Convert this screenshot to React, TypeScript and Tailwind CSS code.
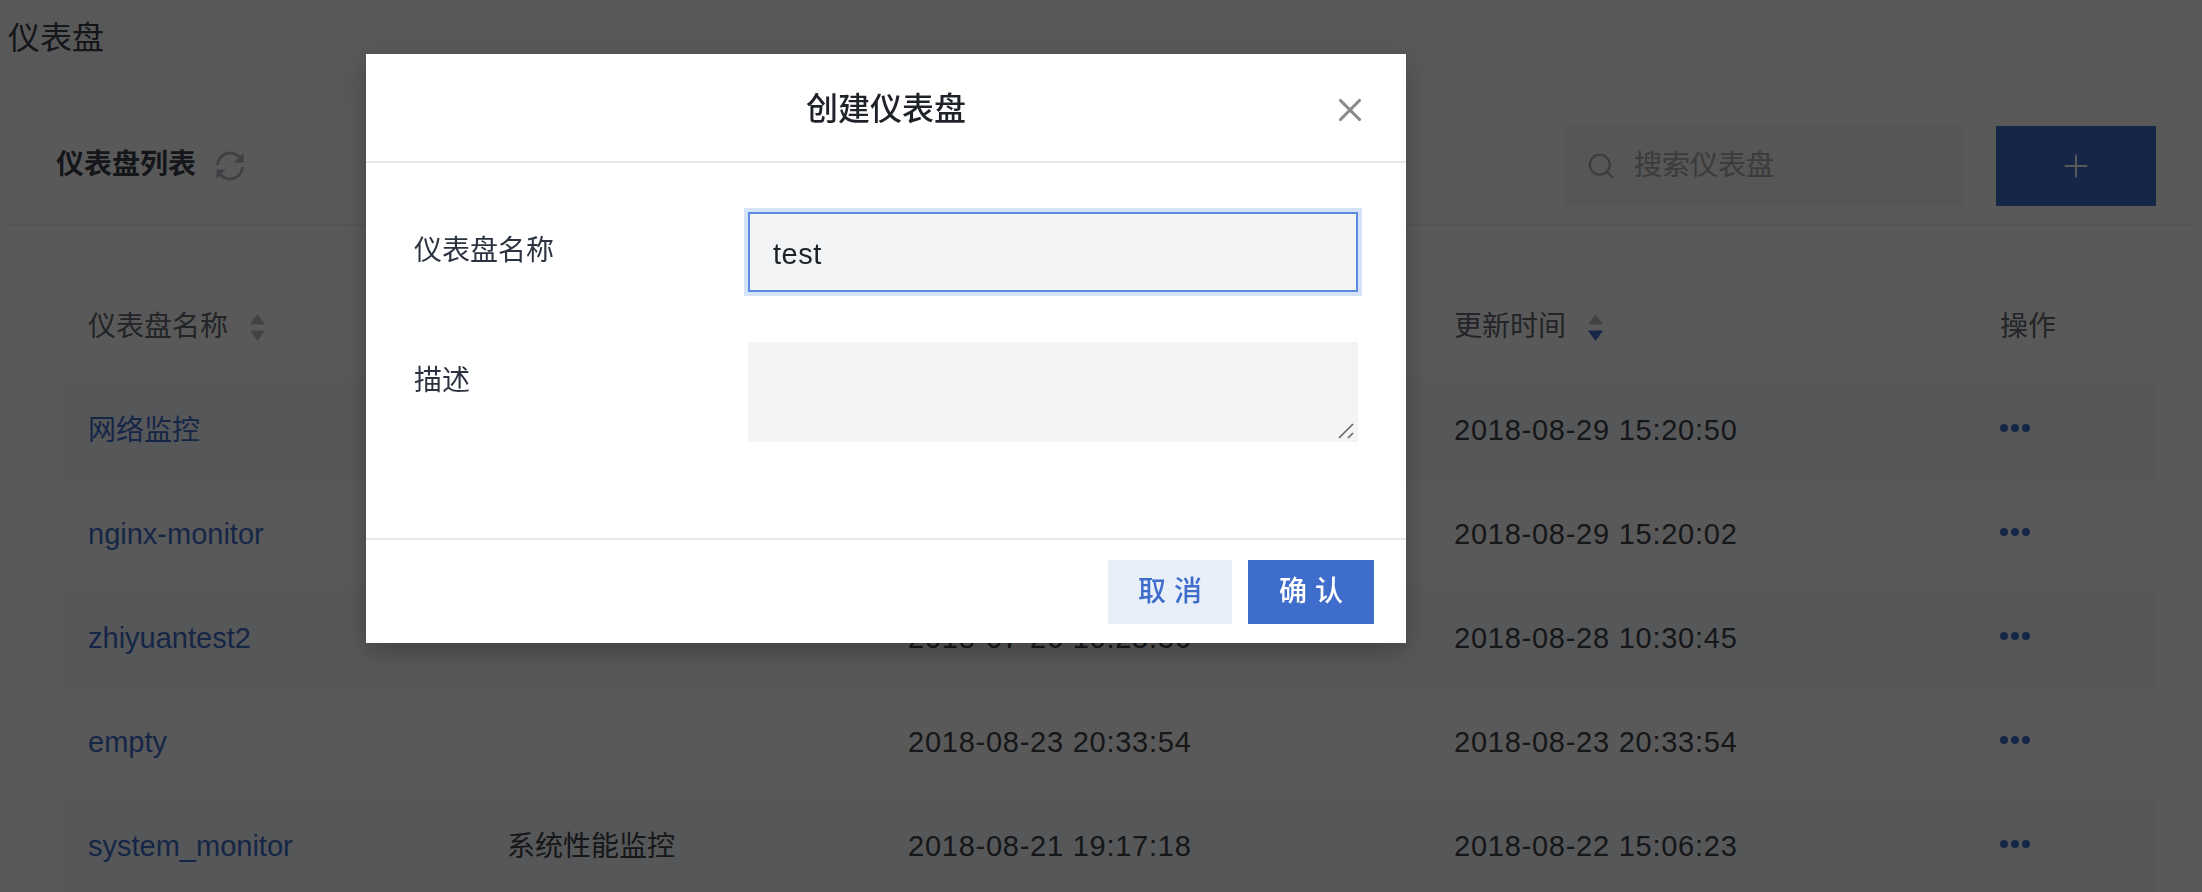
import { Search, X, Plus } from 'lucide-react'

const fontStack = '[font-family:"Liberation_Sans","Noto_Sans_CJK_SC",sans-serif]'

const rows = [
  { name: '网络监控', desc: '', created: '2018-08-29 15:18:32', updated: '2018-08-29 15:20:50' },
  { name: 'nginx-monitor', desc: '', created: '2018-08-29 14:52:10', updated: '2018-08-29 15:20:02' },
  { name: 'zhiyuantest2', desc: '', created: '2018-07-26 10:25:36', updated: '2018-08-28 10:30:45' },
  { name: 'empty', desc: '', created: '2018-08-23 20:33:54', updated: '2018-08-23 20:33:54' },
  { name: 'system_monitor', desc: '系统性能监控', created: '2018-08-21 19:17:18', updated: '2018-08-22 15:06:23' },
]

function SortCaret({ active }: { active?: boolean }) {
  return (
    <svg width="15" height="27" viewBox="0 0 15 27" className="ml-[22px] shrink-0">
      <path d="M7.5 0 L15 10.5 L0 10.5 Z" fill="#bdbdbd" />
      <path d="M7.5 27 L15 16.5 L0 16.5 Z" fill={active ? '#3f6dcc' : '#bdbdbd'} />
    </svg>
  )
}

function RefreshIcon() {
  return (
    <svg width="32" height="32" viewBox="0 0 32 32" fill="none" className="ml-[18px]">
      <path d="M3.5 15 A12.5 12.5 0 0 1 25.5 7.5" stroke="#b4b8bf" strokeWidth="3" />
      <path d="M28.5 17 A12.5 12.5 0 0 1 6.5 24.5" stroke="#b4b8bf" strokeWidth="3" />
      <path d="M29.5 3 V12.5 H20 Z" fill="#b4b8bf" />
      <path d="M2.5 29 V19.5 H12 Z" fill="#b4b8bf" />
    </svg>
  )
}

function Dots() {
  return (
    <div className="mb-[6px] flex gap-[3px]">
      <span className="size-[8px] rounded-full bg-[#3f6dcc]" />
      <span className="size-[8px] rounded-full bg-[#3f6dcc]" />
      <span className="size-[8px] rounded-full bg-[#3f6dcc]" />
    </div>
  )
}

function Dashboard() {
  return (
    <div className="h-[892px] overflow-hidden bg-[#fbfdfd]">
      <div className="h-[106px] pl-2 pt-[18px] text-[32px] leading-[40px] text-[#3a404a]">仪表盘</div>
      <div className="mx-2 h-[786px] bg-white">
        <div className="flex h-[120px] items-center border-b-2 border-[#f0f0f0] pl-[48px] pr-[38px] pt-[2px]">
          <span className="mb-[2px] text-[28px] font-bold text-[#3a404a]">仪表盘列表</span>
          <RefreshIcon />
          <div className="ml-auto flex h-[80px] w-[399px] items-center gap-[18px] bg-[#f3f5f4] pl-[21px] text-[28px] text-[#a6aab0]">
            <Search size={30} strokeWidth={1.6} className="text-[#a6aab0]" />
            搜索仪表盘
          </div>
          <div className="ml-8 flex h-[80px] w-[160px] items-center justify-center bg-[#3f6dcc] text-white">
            <Plus size={36} strokeWidth={1.33} />
          </div>
        </div>
        <div className="px-[49px] pr-[38px]">
          <div className="grid h-[152px] grid-cols-[419px_401px_546px_546px_187px] items-center pt-[50px] text-[28px] text-[#62676f]">
            <div className="flex items-center pl-[31px]">仪表盘名称<SortCaret /></div>
            <div className="pl-[31px]">描述</div>
            <div className="flex items-center pl-[31px]">创建时间<SortCaret /></div>
            <div className="flex items-center pl-[31px]">更新时间<SortCaret active /></div>
            <div className="pl-[31px]">操作</div>
          </div>
          {rows.map((r, i) => (
            <div
              key={r.name}
              className={`grid h-[104px] grid-cols-[419px_401px_546px_546px_187px] items-center pt-[2px] text-[28px] text-[#3e4248] ${i % 2 === 0 ? 'bg-[#f6f8fb]' : 'bg-white'}`}
            >
              <div className={`pl-[31px] text-[#3f6dcc] ${i === 0 ? 'text-[28px]' : 'text-[29px]'}`}>{r.name}</div>
              <div className="pl-[31px]">{r.desc}</div>
              <div className="pl-[31px] text-[29px] tracking-[0.75px]">{r.created}</div>
              <div className="pl-[31px] text-[29px] tracking-[0.75px]">{r.updated}</div>
              <div className="pl-[31px]"><Dots /></div>
            </div>
          ))}
        </div>
      </div>
    </div>
  )
}

function CreateModal() {
  return (
    <div className="ml-[366px] mt-[54px] h-[589px] w-[1040px] bg-white shadow-[0_8px_24px_rgba(0,0,0,0.25)]">
      <div className="relative flex h-[109px] items-center justify-center border-b-2 border-[#e8e8e8] pt-[3px] text-[32px] font-medium text-[#1f2329]">
        创建仪表盘
        <X size={38} strokeWidth={2} className="absolute right-[37px] top-[37px] text-[#8a8a8a]" />
      </div>
      <div className="h-[375px] pl-[48px] pt-[49px] text-[28px] text-[#2b3340]">
        <div className="flex">
          <div className="w-[334px] pt-[18px]">仪表盘名称</div>
          <input
            readOnly
            value="test"
            className="h-[80px] w-[610px] border-2 border-[#5b8bdc] bg-[#f3f4f6] px-[23px] pt-[5px] text-[29px] tracking-[0.5px] text-[#1f2329] shadow-[0_0_0_4px_#d6e2f7] outline-none"
          />
        </div>
        <div className="mt-[50px] flex">
          <div className="w-[334px] pt-[18px]">描述</div>
          <div className="relative h-[100px] w-[610px]">
            <textarea readOnly className="block size-full resize-none bg-[#f3f4f6] outline-none" />
            <svg width="20" height="20" viewBox="0 0 20 20" className="absolute bottom-0 right-0">
              <path d="M15 2 L1 16 M15 11 L10 16" stroke="#666" strokeWidth="1.6" fill="none" />
            </svg>
          </div>
        </div>
      </div>
      <div className="flex h-[105px] items-start justify-end gap-4 border-t-2 border-[#e8e8e8] pr-8 pt-[20px] text-[28px] font-medium">
        <button className="h-[64px] w-[124px] bg-[#e8eff9] text-[#3f6dcc]">取 消</button>
        <button className="h-[64px] w-[126px] bg-[#3f6dcc] text-white">确 认</button>
      </div>
    </div>
  )
}

export default function App() {
  return (
    <div className={`relative h-[892px] w-[2202px] overflow-hidden ${fontStack}`}>
      <Dashboard />
      <div className="absolute inset-0 bg-[rgba(0,0,0,0.65)] backdrop-blur-[0.5px]">
        <CreateModal />
      </div>
    </div>
  )
}
